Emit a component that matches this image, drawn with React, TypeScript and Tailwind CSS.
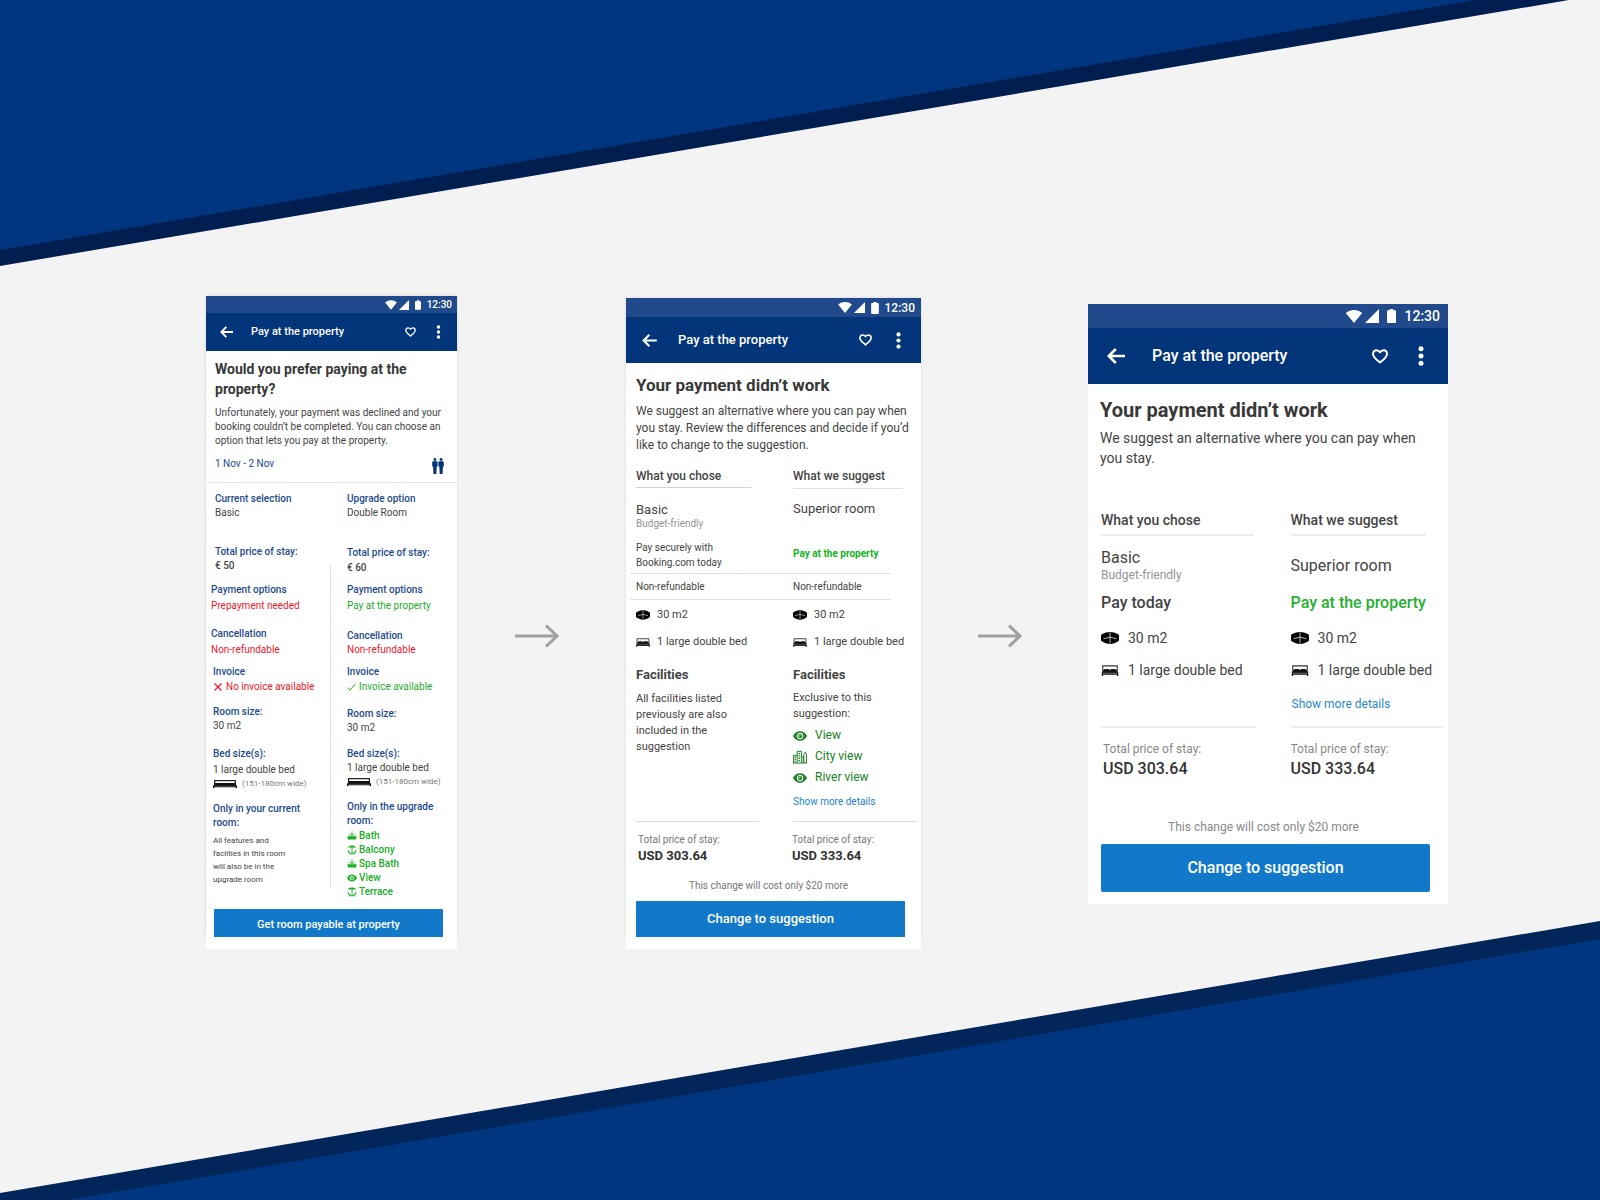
import type { ReactNode } from "react";

type IconProps = { className?: string };

function WifiIcon({ className }: IconProps) {
  return (
    <svg viewBox="0 0 18 14" className={className} fill="currentColor" aria-hidden="true">
      <path d="M9 14 0.2 3.1C2.6 1.1 5.700 0 9 0s6.400 1.100 8.800 3.100z" />
    </svg>
  );
}

function SignalIcon({ className }: IconProps) {
  return (
    <svg viewBox="0 0 14 14" className={className} fill="currentColor" aria-hidden="true">
      <path d="M14 0v14H0z" />
    </svg>
  );
}

function BatteryIcon({ className }: IconProps) {
  return (
    <svg viewBox="0 0 9 14" className={className} fill="currentColor" aria-hidden="true">
      <path d="M2.700 0h3.600v1.300H8c.6 0 1 .4 1 1V13c0 .6-.4 1-1 1H1c-.6 0-1-.4-1-1V2.300c0-.6.4-1 1-1h1.700z" />
    </svg>
  );
}

function BackIcon({ className }: IconProps) {
  return (
    <svg viewBox="0 0 18 16" className={className} fill="none" stroke="currentColor" strokeWidth="2.600" aria-hidden="true">
      <path d="M18 8H2M8.800 1 1.800 8l7 7" />
    </svg>
  );
}

function HeartIcon({ className }: IconProps) {
  return (
    <svg viewBox="0 0 16 15" className={className} fill="none" stroke="currentColor" strokeWidth="2" strokeLinejoin="round" aria-hidden="true">
      <path d="M8 13.500C4.500 10.600 1 8.200 1 4.900 1 2.700 2.600 1.200 4.500 1.200c1.400 0 2.700.8 3.500 2.100.8-1.300 2.100-2.100 3.500-2.100C13.400 1.200 15 2.700 15 4.900c0 3.300-3.500 5.700-7 8.600z" />
    </svg>
  );
}

function DotsIcon({ className }: IconProps) {
  return (
    <svg viewBox="0 0 6 20" className={className} fill="currentColor" aria-hidden="true">
      <circle cx="3" cy="2.700" r="2.500" />
      <circle cx="3" cy="10" r="2.500" />
      <circle cx="3" cy="17.300" r="2.500" />
    </svg>
  );
}

function GuestsIcon({ className }: IconProps) {
  return (
    <svg viewBox="0 0 12 16" className={className} fill="currentColor" aria-hidden="true">
      <circle cx="2.900" cy="1.500" r="1.400" />
      <circle cx="9.100" cy="1.500" r="1.400" />
      <path d="M1.200 3.300h3.400c.6 0 1 .5 1 1v4.200H4.700L4.300 16H1.500L1.100 8.500H.2V4.300c0-.5.4-1 1-1zM7.400 3.300h3.400c.6 0 1 .5 1 1v4.200h-.9l-.4 7.500H7.700l-.4-7.500h-.9V4.300c0-.5.4-1 1-1z" />
    </svg>
  );
}

function WideBedIcon({ className }: IconProps) {
  return (
    <svg viewBox="0 0 24 8" className={className} aria-hidden="true">
      <path d="M1.600 4V.6h20.800V4" fill="none" stroke="#222" strokeWidth="1.200" />
      <path d="M2 3h20l2 3v2h-1.500v-.7h-21V8H0V6z" fill="#111" />
      <path d="M1 6.300h22" stroke="#777" strokeWidth="0.600" />
    </svg>
  );
}

function BedIcon({ className }: IconProps) {
  return (
    <svg viewBox="0 0 18 12" className={className} aria-hidden="true">
      <path d="M1.100 6.500V1h15.800v5.500" fill="none" stroke="#333" strokeWidth="1.200" />
      <path d="M1.600 5.600 3.200 4.300h4.300L9 5.400l1.500-1.100h4.300l1.600 1.300L18 8v4h-1.300v-1.400H1.300V12H0V8z" fill="#151515" />
      <path d="M.8 9h16.400" stroke="#aaa" strokeWidth="0.600" />
    </svg>
  );
}

function AreaIcon({ className }: IconProps) {
  return (
    <svg viewBox="0 0 18 12" className={className} aria-hidden="true">
      <path d="M9 0c2.800 0 5.400.9 7.700 2 .9.400 1.300.9 1.300 1.700v4.200c0 .8-.5 1.200-1.300 1.600C14.600 10.800 12 12 9 12s-5.600-1.200-7.700-2.500C.5 9.100 0 8.700 0 7.900V3.700C0 2.900.4 2.400 1.300 2 3.600.9 6.200 0 9 0z" fill="#000" />
      <path d="M9 .5v11M2.500 6.800 9 5.200l6.500 1.600" fill="none" stroke="#fff" strokeWidth="0.700" />
    </svg>
  );
}

function EyeIcon({ className }: IconProps) {
  return (
    <svg viewBox="0 0 16 11" className={className} aria-hidden="true">
      <path d="M0 5.500C1.700 2.200 4.600 0 8 0s6.300 2.200 8 5.500C14.300 8.800 11.400 11 8 11S1.700 8.800 0 5.500z" fill="currentColor" />
      <circle cx="8" cy="5.500" r="3.100" fill="none" stroke="#fff" strokeWidth="1.200" />
      <path d="M8 3.700v1.900H6.200" fill="none" stroke="#fff" strokeWidth="0.900" />
    </svg>
  );
}

function CityIcon({ className }: IconProps) {
  return (
    <svg viewBox="0 0 16 15" className={className} fill="none" stroke="currentColor" strokeWidth="1.100" aria-hidden="true">
      <path d="M.6 14.400V5.600h4.200M4.800 14.400V1h4.800v13.400M9.600 7.200h2.200v7.200M12.400 14.400V4.600L14 2l1.400 2.600v9.800M0 14.400h16" />
      <path d="M2.700 7v6.500M7.200 2.800v10.700" strokeDasharray="1.500 1.200" strokeWidth="1.700" />
    </svg>
  );
}

function BathIcon({ className }: IconProps) {
  return (
    <svg viewBox="0 0 10 10" className={className} fill="currentColor" aria-hidden="true">
      <path d="M.3 5.200h9.400L9 8.600H1z" />
      <path d="M3 4.500c0-1 .9-1.300 2-1.300s2 .3 2 1.300zM4.500.4h1v2.400h-1zM2 2.600l.9.9-.5.500-.9-.9zM8 2.600l-.9.900.5.500.9-.9z" />
    </svg>
  );
}

function TerraceIcon({ className }: IconProps) {
  return (
    <svg viewBox="0 0 10 10" className={className} fill="currentColor" aria-hidden="true">
      <path d="M.5 2.400C2 1 3.500.6 5 .6s3 .4 4.500 1.800zM4.600 2.400h.9v6h-.9zM2 8.300h6v.9H2zM.6 5h.9l.7 2h1.300v.8H1.300zM9.400 5h-.9l-.7 2H6.500v.8h2.200z" />
    </svg>
  );
}

function CrossIcon({ className }: IconProps) {
  return (
    <svg viewBox="0 0 8 8" className={className} fill="none" stroke="currentColor" strokeWidth="1.200" aria-hidden="true">
      <path d="m.5.5 7 7M7.500.5l-7 7" />
    </svg>
  );
}

function CheckIcon({ className }: IconProps) {
  return (
    <svg viewBox="0 0 9 8" className={className} fill="none" stroke="currentColor" aria-hidden="true">
      <path d="m.5 4.700 2.300 2.500L8.500.8" />
    </svg>
  );
}

function StepArrow() {
  return (
    <div className="flex justify-center pt-[328px] pr-[10px] text-[#a0a0a0]">
      <svg viewBox="0 0 44 24" className="h-6 w-11" fill="none" stroke="currentColor" strokeWidth="3" aria-hidden="true">
        <path d="M0 12h42M31 1.500 42 12 31 22.500" />
      </svg>
    </div>
  );
}

function StatusBar({ size }: { size: "sm" | "md" | "lg" }) {
  const bar = {
    sm: "h-[17px] gap-[2px] pr-[5px] text-[10px]",
    md: "h-[19px] gap-[2px] pr-[6px] text-[12px]",
    lg: "h-6 gap-[2px] pr-2 text-[14px]",
  }[size];
  const wifi = { sm: "h-[10px] w-3", md: "h-[11px] w-[14px]", lg: "h-[13px] w-[18px]" }[size];
  const signal = { sm: "h-[10px] w-[10px]", md: "h-[11px] w-[11px]", lg: "h-[14px] w-[14px]" }[size];
  const battery = { sm: "mx-1 h-[10px] w-[6px]", md: "mx-1 h-3 w-2", lg: "mx-[6px] h-[14px] w-[9px]" }[size];
  return (
    <div className={`flex items-center justify-end bg-[#204a8b] font-medium text-white ${bar}`}>
      <WifiIcon className={wifi} />
      <SignalIcon className={signal} />
      <BatteryIcon className={battery} />
      <span>12:30</span>
    </div>
  );
}

function NavBar({ size }: { size: "sm" | "md" | "lg" }) {
  const bar = {
    sm: "h-[38px] pl-[14px] pr-4 text-[11px]",
    md: "h-[46px] pl-4 pr-[20px] text-[13px]",
    lg: "h-14 pl-[19px] pr-6 text-[16px]",
  }[size];
  const back = { sm: "h-3 w-[13px]", md: "h-[13px] w-[15px]", lg: "h-4 w-[18px]" }[size];
  const title = { sm: "ml-[18px]", md: "ml-[21px]", lg: "ml-[27px]" }[size];
  const heart = { sm: "h-[10px] w-[11px]", md: "h-3 w-[13px]", lg: "h-[15px] w-4" }[size];
  const dots = { sm: "ml-5 h-[14px] w-[5px]", md: "ml-6 h-[17px] w-[5px]", lg: "ml-[30px] h-5 w-[6px]" }[size];
  return (
    <header className={`flex items-center bg-[#03357b] font-medium text-white ${bar}`}>
      <button type="button" aria-label="Back">
        <BackIcon className={back} />
      </button>
      <h2 className={`flex-1 ${title}`}>Pay at the property</h2>
      <button type="button" aria-label="Save">
        <HeartIcon className={heart} />
      </button>
      <button type="button" aria-label="More options">
        <DotsIcon className={dots} />
      </button>
    </header>
  );
}

function Entry({ label, children, className = "" }: { label: string; children: ReactNode; className?: string }) {
  return (
    <div className={`flex flex-col ${className}`}>
      <h4 className="font-medium text-[#1d4a8d]">{label}</h4>
      {children}
    </div>
  );
}

function IconLine({ icon, children, className = "" }: { icon: ReactNode; children: ReactNode; className?: string }) {
  return (
    <p className={`flex items-center whitespace-nowrap ${className}`}>
      {icon}
      <span>{children}</span>
    </p>
  );
}

const upgradeExtras = [
  { name: "Bath", Icon: BathIcon },
  { name: "Balcony", Icon: TerraceIcon },
  { name: "Spa Bath", Icon: BathIcon },
  { name: "View", Icon: EyeIcon },
  { name: "Terrace", Icon: TerraceIcon },
];

function FirstScreen() {
  return (
    <article>
      <div className="bg-white shadow-[0_0_3px_rgba(0,0,0,0.12)]">
        <StatusBar size="sm" />
        <NavBar size="sm" />
        <div className="border-b border-[#e4e4e4] px-[9px] pt-2 pb-2">
          <h1 className="text-[14px] leading-[20px] font-bold text-[#383838]">Would you prefer paying at the property?</h1>
          <p className="mt-[7px] text-[10px] leading-[14px] text-[#444]">
            Unfortunately, your payment was declined and your booking couldn’t be completed. You can choose an option
            that lets you pay at the property.
          </p>
          <div className="mt-[6px] flex items-center justify-between pr-1 text-[#1d4a8d]">
            <span className="text-[10px] leading-[14px]">1 Nov - 2 Nov</span>
            <GuestsIcon className="mt-1 h-4 w-3 text-[#03357b]" />
          </div>
        </div>
        <div className="flex pt-[9px] text-[10px] leading-[14px] text-[#444]">
          <section className="flex flex-1 flex-col">
            <div className="flex flex-col gap-[25px] pl-[9px]">
              <Entry label="Current selection">
                <p>Basic</p>
              </Entry>
              <Entry label="Total price of stay:">
                <p className="font-medium">€ 50</p>
              </Entry>
            </div>
            <div className="mt-[10px] flex flex-col gap-[14px] pl-[5px] text-[#f2162b]">
              <Entry label="Payment options" className="gap-[2px]">
                <p>Prepayment needed</p>
              </Entry>
              <Entry label="Cancellation" className="gap-[2px]">
                <p>Non-refundable</p>
              </Entry>
            </div>
            <div className="mt-2 flex flex-col pl-[7px]">
              <Entry label="Invoice" className="gap-px">
                <IconLine className="gap-1 text-[#f2162b]" icon={<CrossIcon className="ml-px h-2 w-2" />}>
                  No invoice available
                </IconLine>
              </Entry>
              <Entry label="Room size:" className="mt-[11px]">
                <p>30 m2</p>
              </Entry>
              <Entry label="Bed size(s):" className="mt-[14px] gap-[2px]">
                <p>1 large double bed</p>
              </Entry>
              <IconLine className="gap-[5px] text-[8px] text-[#777]" icon={<WideBedIcon className="h-2 w-6" />}>
                (151-180cm wide)
              </IconLine>
              <Entry label="Only in your current room:" className="mt-[11px] w-24 gap-1">
                <p className="w-[78px] text-[8px] leading-[13px]">
                  All features and faclities in this room will also be in the upgrade room
                </p>
              </Entry>
            </div>
          </section>
          <div className="mt-[74px] mb-[11px] w-px bg-[#dedede]" />
          <section className="flex w-[126px] flex-col pl-4">
            <Entry label="Upgrade option">
              <p>Double Room</p>
            </Entry>
            <Entry label="Total price of stay:" className="mt-[26px] gap-px">
              <p className="font-medium">€ 60</p>
            </Entry>
            <Entry label="Payment options" className="mt-2 gap-[2px]">
              <p className="text-[#1fab2d]">Pay at the property</p>
            </Entry>
            <Entry label="Cancellation" className="mt-4">
              <p className="text-[#f2162b]">Non-refundable</p>
            </Entry>
            <Entry label="Invoice" className="mt-2 gap-px">
              <IconLine className="gap-[3px] text-[#1fab2d]" icon={<CheckIcon className="h-2 w-[9px]" />}>
                Invoice available
              </IconLine>
            </Entry>
            <Entry label="Room size:" className="mt-[13px]">
              <p>30 m2</p>
            </Entry>
            <Entry label="Bed size(s):" className="mt-3">
              <p>1 large double bed</p>
            </Entry>
            <IconLine className="gap-[5px] text-[8px] text-[#777]" icon={<WideBedIcon className="h-2 w-6" />}>
              (151-180cm wide)
            </IconLine>
            <Entry label="Only in the upgrade room:" className="mt-[11px] gap-px">
              <ul className="font-medium text-[#17ae26]">
                {upgradeExtras.map(({ name, Icon }) => (
                  <li key={name} className="flex items-center gap-[2px]">
                    <Icon className="h-[10px] w-[10px]" />
                    {name}
                  </li>
                ))}
              </ul>
            </Entry>
          </section>
        </div>
        <div className="pt-[10px] pr-[14px] pl-2">
          <button type="button" className="block h-7 w-full rounded-t-[1px] bg-[#1279ca] pt-[5px] text-[11px] font-medium text-white">
            Get room payable at property
          </button>
        </div>
      </div>
      <div className="h-3 bg-white" />
    </article>
  );
}

function SecondScreen() {
  return (
    <article className="mt-[2px]">
      <div className="bg-white shadow-[0_0_3px_rgba(0,0,0,0.12)]">
        <StatusBar size="md" />
        <NavBar size="md" />
        <div className="pt-3 pl-[10px]">
          <h1 className="text-[17px] leading-[20px] font-bold text-[#383838]">Your payment didn’t work</h1>
          <p className="mt-2 pr-2 text-[12px] leading-[17px] text-[#444]">
            We suggest an alternative where you can pay when you stay. Review the differences and decide if you’d like
            to change to the suggestion.
          </p>
        </div>
        <div className="mt-[14px] grid grid-cols-[157fr_138fr] text-[12px] text-[#444]">
          <section className="pl-[10px]">
            <h3 className="mr-8 border-b border-[#d2d2d2] pb-[3px] leading-[16px] font-medium">What you chose</h3>
            <p className="mt-[14px] text-[13px] leading-[16px]">Basic</p>
            <p className="text-[10px] leading-[12px] text-[#949494]">Budget-friendly</p>
            <p className="mt-[10px] text-[10px] leading-[15px]">
              Pay securely with
              <br />
              Booking.com today
            </p>
          </section>
          <section className="pl-[10px]">
            <h3 className="mr-[18px] border-b border-[#e0e0e0] pb-1 leading-[16px] font-medium">What we suggest</h3>
            <p className="mt-3 text-[13px] leading-[16px]">Superior room</p>
            <p className="mt-[29px] text-[10px] leading-[15px] font-bold text-[#10b41c]">Pay at the property</p>
          </section>
        </div>
        <div className="mt-[3px] mr-[30px] ml-1 grid grid-cols-[157fr_104fr] border-y border-[#e0e0e0] py-[5px] text-[10px] leading-[15px] text-[#444]">
          <p className="pl-[6px]">Non-refundable</p>
          <p className="pl-[6px]">Non-refundable</p>
        </div>
        <div className="grid grid-cols-[157fr_138fr] text-[11px] leading-[16px] text-[#444]">
          <section className="flex flex-col pt-[7px] pl-[10px]">
            <IconLine className="gap-[7px]" icon={<AreaIcon className="h-[10px] w-[14px]" />}>
              30 m2
            </IconLine>
            <IconLine className="mt-[11px] gap-[7px]" icon={<BedIcon className="h-[9px] w-[14px]" />}>
              1 large double bed
            </IconLine>
            <h3 className="mt-4 text-[13px] leading-[17px] font-bold">Facilities</h3>
            <p className="mt-2 w-[100px]">All facilities listed previously are also included in the suggestion</p>
            <div className="mt-auto mr-6 border-b border-[#dadada]" />
          </section>
          <section className="flex flex-col pt-[7px] pl-[10px]">
            <IconLine className="gap-[7px]" icon={<AreaIcon className="h-[10px] w-[14px]" />}>
              30 m2
            </IconLine>
            <IconLine className="mt-[11px] gap-[7px]" icon={<BedIcon className="h-[9px] w-[14px]" />}>
              1 large double bed
            </IconLine>
            <h3 className="mt-4 text-[13px] leading-[17px] font-bold">Facilities</h3>
            <p className="mt-[7px] w-[100px]">Exclusive to this suggestion:</p>
            <ul className="mt-[3px] text-[12px] leading-[21px] text-[#198022]">
              <li className="flex items-center gap-2">
                <EyeIcon className="h-[10px] w-[14px]" />
                View
              </li>
              <li className="flex items-center gap-2">
                <CityIcon className="h-[14px] w-[14px]" />
                City view
              </li>
              <li className="flex items-center gap-2">
                <EyeIcon className="h-[10px] w-[14px]" />
                River view
              </li>
            </ul>
            <a href="#details" className="mt-[6px] text-[10px] leading-[16px] text-[#1b7fcf]">
              Show more details
            </a>
            <div className="mt-[11px] mr-1 border-b border-[#dadada]" />
          </section>
        </div>
        <div className="grid grid-cols-[157fr_138fr] pt-[10px]">
          <p className="flex flex-col pl-3">
            <span className="text-[10px] leading-[15px] text-[#777]">Total price of stay:</span>
            <strong className="text-[13px] leading-[18px] font-bold text-[#333]">USD 303.64</strong>
          </p>
          <p className="flex flex-col pl-[9px]">
            <span className="text-[10px] leading-[15px] text-[#777]">Total price of stay:</span>
            <strong className="text-[13px] leading-[18px] font-bold text-[#333]">USD 333.64</strong>
          </p>
        </div>
        <div className="pt-[13px] pr-4 pl-[10px]">
          <p className="pr-1 text-center text-[10px] leading-[16px] text-[#777]">This change will cost only $20 more</p>
          <button type="button" className="mt-[7px] block h-9 w-full rounded-t-[1px] bg-[#1279ca] text-[13px] font-medium text-white">
            Change to suggestion
          </button>
        </div>
      </div>
      <div className="h-3 bg-white" />
    </article>
  );
}

function ThirdScreen() {
  return (
    <article className="mt-2 bg-white">
      <StatusBar size="lg" />
      <NavBar size="lg" />
      <div className="pt-[14px] pr-5 pl-3">
        <h1 className="text-[20px] leading-[24px] font-bold text-[#383838]">Your payment didn’t work</h1>
        <p className="mt-[6px] text-[14px] leading-[20px] text-[#444]">
          We suggest an alternative where you can pay when you stay.
        </p>
      </div>
      <div className="mt-[42px] grid grid-cols-[190fr_169fr] text-[14px] leading-[20px] text-[#444]">
        <section className="pl-[13px]">
          <h3 className="mr-[25px] border-b-2 border-[#ececec] pb-1 font-medium">What you chose</h3>
          <p className="mt-3 text-[16px]">Basic</p>
          <p className="text-[12px] leading-[15px] text-[#949494]">Budget-friendly</p>
          <p className="mt-[10px] text-[16px] font-medium">Pay today</p>
        </section>
        <section className="pl-3">
          <h3 className="mr-[22px] border-b-2 border-[#ececec] pb-1 font-medium">What we suggest</h3>
          <p className="mt-5 text-[16px]">Superior room</p>
          <p className="mt-[17px] text-[16px] font-medium whitespace-nowrap text-[#23b12f]">Pay at the property</p>
        </section>
      </div>
      <div className="mt-[15px] grid grid-cols-[190fr_169fr] text-[14px] leading-[20px] text-[#444]">
        <section className="flex flex-col pl-[13px]">
          <IconLine className="gap-[9px]" icon={<AreaIcon className="h-3 w-[18px]" />}>
            30 m2
          </IconLine>
          <IconLine className="mt-3 gap-[9px]" icon={<BedIcon className="h-[11px] w-[18px]" />}>
            1 large double bed
          </IconLine>
          <div className="mt-auto mr-6 border-b-2 border-[#ececec]" />
        </section>
        <section className="flex flex-col pl-3">
          <IconLine className="gap-[9px]" icon={<AreaIcon className="h-3 w-[18px]" />}>
            30 m2
          </IconLine>
          <IconLine className="mt-3 gap-[9px]" icon={<BedIcon className="h-[11px] w-[18px]" />}>
            1 large double bed
          </IconLine>
          <a href="#more" className="mt-[14px] pl-px text-[12px] text-[#2b87d1]">
            Show more details
          </a>
          <div className="mt-3 mr-[5px] border-b-2 border-[#ececec]" />
        </section>
      </div>
      <div className="grid grid-cols-[190fr_169fr] pt-3">
        <p className="flex flex-col pl-[15px]">
          <span className="text-[12px] leading-[18px] text-[#888]">Total price of stay:</span>
          <strong className="text-[16px] leading-[22px] font-medium text-[#333]">USD 303.64</strong>
        </p>
        <p className="flex flex-col pl-3">
          <span className="text-[12px] leading-[18px] text-[#888]">Total price of stay:</span>
          <strong className="text-[16px] leading-[22px] font-medium text-[#333]">USD 333.64</strong>
        </p>
      </div>
      <div className="pt-[38px] pr-[18px] pb-3 pl-[13px]">
        <p className="pr-1 text-center text-[12px] leading-[18px] text-[#888]">This change will cost only $20 more</p>
        <button type="button" className="mt-2 block h-12 w-full rounded-[2px] bg-[#1279ca] text-[16px] font-medium text-white">
          Change to suggestion
        </button>
      </div>
    </article>
  );
}

function Backdrop() {
  return (
    <svg viewBox="0 0 1600 1200" preserveAspectRatio="none" className="absolute inset-0 h-full w-full" aria-hidden="true">
      <path d="M0 0h1569L0 266z" fill="#001f50" />
      <path d="M0 0h1474L0 250z" fill="#003580" />
      <path d="M1600 921v279H0v-7z" fill="#02265a" />
      <path d="M1600 939v261H68z" fill="#003580" />
    </svg>
  );
}

export default function App() {
  return (
    <main className="relative min-h-screen overflow-hidden bg-[#f3f3f3] font-['Roboto',sans-serif]">
      <Backdrop />
      <div className="relative grid grid-cols-[251fr_169fr_295fr_167fr_360fr] items-start pt-[296px] pr-[152px] pl-[206px]">
        <FirstScreen />
        <StepArrow />
        <SecondScreen />
        <StepArrow />
        <ThirdScreen />
      </div>
    </main>
  );
}
